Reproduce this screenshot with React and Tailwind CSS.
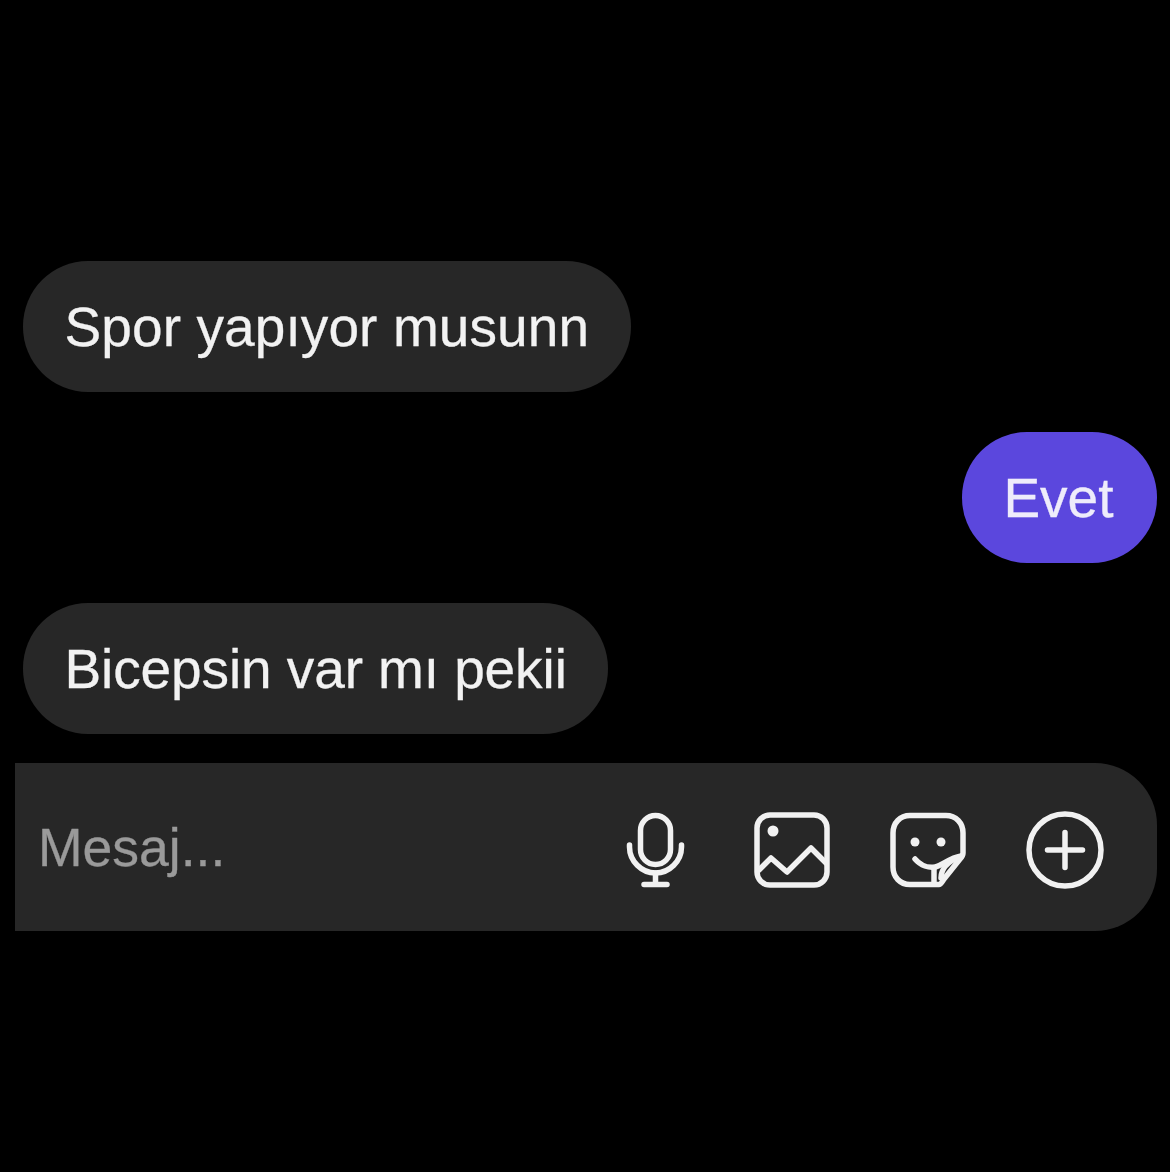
const font = { fontFamily: '"Liberation Sans", Arial, sans-serif' };

function Bubble({ children, me, tracking }) {
  return (
    <div className={me ? "flex justify-end pl-[23px] pr-[13px]" : "flex justify-start pl-[23px] pr-[13px]"}>
      <div className={(me ? "bg-[#5b47dd] text-[#eeecfb] pl-[41px] pr-[43.5px]" : "bg-[#272727] text-[#f2f2f2] px-[41.5px]") + " h-[131px] pt-[2px] rounded-[65px] flex items-center text-[55px] leading-none whitespace-nowrap [-webkit-text-stroke:0.3px] " + (tracking || "")}>
        {children}
      </div>
    </div>
  );
}

const S = { fill: "none", stroke: "#f1f1f1", strokeWidth: 5.5, strokeLinecap: "round", strokeLinejoin: "round" };

function Mic() {
  return (
    <svg width="60" height="76" viewBox="0 0 60 76" className="block" {...S}>
      <rect x="14.5" y="3.5" width="30" height="49" rx="15" />
      <path d="M3.5 33v2c0 14 12 26 26 26s26-12 26-26v-2" />
      <path d="M29.5 61v11M18 72.5h23" />
    </svg>
  );
}
function Pic() {
  return (
    <svg width="76" height="76" viewBox="0 0 76 76" className="block" {...S}>
      <rect x="3" y="3" width="70" height="70" rx="13" />
      <circle cx="19" cy="19" r="5.5" fill="#f1f1f1" stroke="none" />
      <path d="M5 58l12-12 16 14 24-24 15 15" />
    </svg>
  );
}
function Sticker() {
  return (
    <svg width="76" height="76" viewBox="0 0 76 76" className="block" {...S}>
      <path d="M49 72.5H20C10 72.5 3 65 3 55V21C3 11 10 3.5 20 3.5h36C66 3.5 73 11 73 21v20c0 2-1 4-3 6L54 67c-2 3-3 5.500-5 5.500z" />
      <circle cx="25" cy="30" r="4.500" fill="#f1f1f1" stroke="none" />
      <circle cx="51" cy="30" r="4.500" fill="#f1f1f1" stroke="none" />
      <path d="M25 47c6 7 14 9 20 8 7-1 14-9 26-11" />
      <path d="M44 56v15" />
      <path d="M51 66c0-8 6-16 18-21" />
    </svg>
  );
}
function Plus() {
  return (
    <svg width="80" height="80" viewBox="0 0 80 80" className="block" {...S}>
      <circle cx="40" cy="40" r="36" />
      <path d="M40 22.500v35M22.500 40h35" />
    </svg>
  );
}

export default function App() {
  return (
    <div className="w-[1170px] h-[1172px] bg-black flex flex-col pt-[261px] overflow-hidden blur-[0.5px]" style={font}>
      <Bubble tracking="tracking-[0.1px]">Spor yapıyor musunn</Bubble>
      <div className="h-[40px]" />
      <Bubble me>Evet</Bubble>
      <div className="h-[40px]" />
      <Bubble tracking="tracking-[-0.1px]">Bicepsin var mı pekii</Bubble>
      <div className="ml-[15px] mr-[13px] mt-[29px] h-[168px] bg-[#272727] rounded-r-[62px] flex items-center pl-[23px] pr-[52px]">
        <span className="flex-1 text-[53.5px] leading-none text-[#9a9a9a] pt-[2px] [-webkit-text-stroke:0.3px]">Mesaj...</span>
        <div className="flex items-center pt-[5px]">
          <Mic />
          <div className="w-[68px]" />
          <Pic />
          <div className="w-[60px]" />
          <Sticker />
          <div className="w-[59px]" />
          <Plus />
        </div>
      </div>
    </div>
  );
}
